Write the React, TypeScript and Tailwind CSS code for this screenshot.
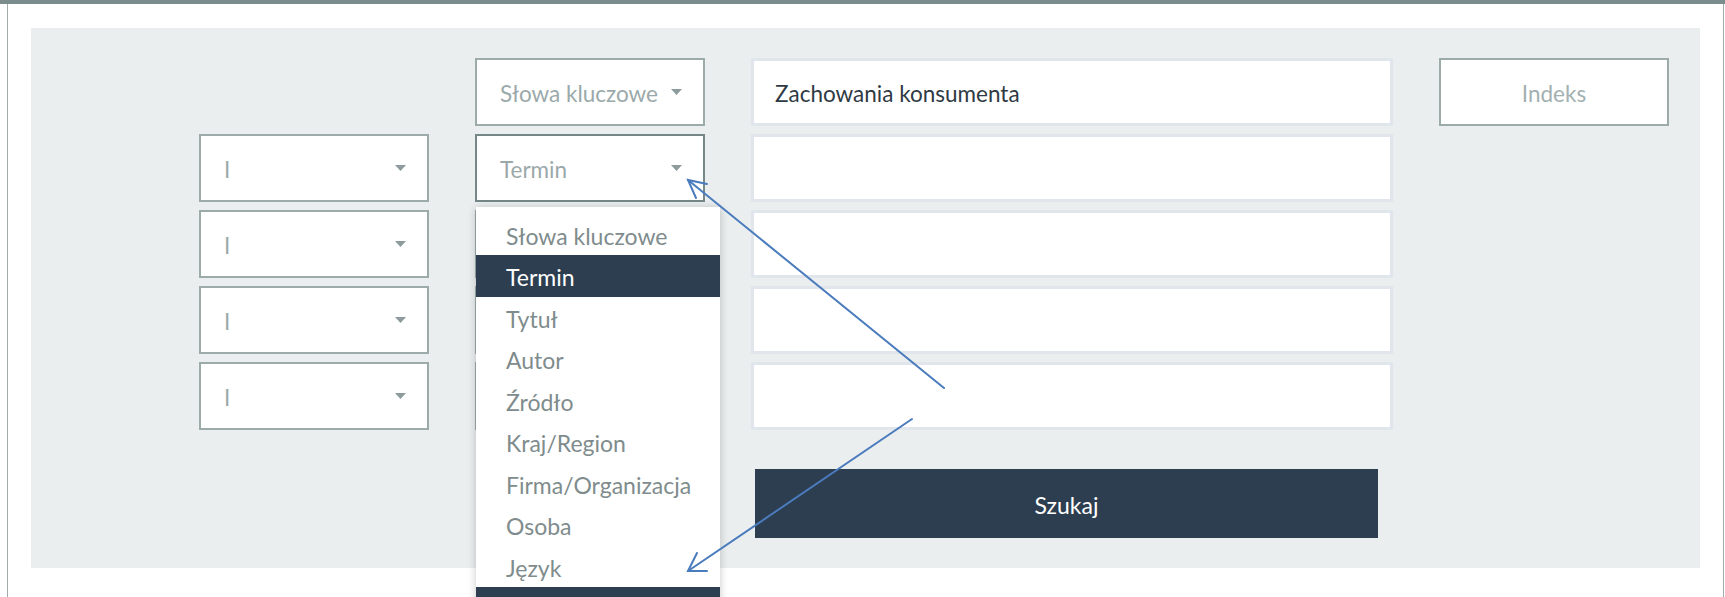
import type { ReactNode } from "react";

const fieldOptions = [
  "Słowa kluczowe",
  "Termin",
  "Tytuł",
  "Autor",
  "Źródło",
  "Kraj/Region",
  "Firma/Organizacja",
  "Osoba",
  "Język",
];

function Caret() {
  return (
    <svg width="11" height="6" viewBox="0 0 11 6" className="shrink-0">
      <path d="M0 0h11L5.5 6z" fill="#8d9b9c" />
    </svg>
  );
}

function Select({
  label = "",
  focused = false,
  children,
}: {
  label?: string;
  focused?: boolean;
  children?: ReactNode;
}) {
  return (
    <div className="relative">
      <div
        className={`flex h-full items-center justify-between bg-white pl-[23px] pr-[21px] border-2 ${
          focused ? "border-[#768787]" : "border-[#9caaa9]"
        }`}
      >
        <span className="pt-[3px] text-[22.5px] text-[#9ba9aa]">{label}</span>
        <Caret />
      </div>
      {children}
    </div>
  );
}

function TextField({ value = "" }: { value?: string }) {
  return (
    <div className="flex items-center bg-white border-[3px] border-[#e0e6ec] pl-[21px] pt-[3px] text-[22.5px] text-[#2f3a44]">
      {value}
    </div>
  );
}

// open list under the "Termin" select
function FieldMenu() {
  return (
    <ul className="absolute left-[1px] top-[73px] z-10 w-[244px] bg-white pt-[6.5px] shadow-[0_1px_8px_rgba(0,0,0,0.22)]">
      {fieldOptions.map((opt, i) => (
        <li
          key={opt}
          className={`flex h-[41.5px] items-center pl-[30px] pt-[3px] text-[23px] ${
            i === 1 ? "bg-[#2c3e50] text-white" : "text-[#7f8c8d]"
          }`}
        >
          {opt}
        </li>
      ))}
      <li className="h-[41.5px] bg-[#2c3e50]" />
    </ul>
  );
}

export default function App() {
  return (
    <div className="relative h-[597px] overflow-hidden bg-white font-['Lato',sans-serif]">
      <div className="h-[4px] bg-[#7b8c8d]" />
      <div className="ml-[7px] mr-[1px] h-[593px] border-x border-[#a2acad] px-[23px] pt-[24px]">
        <div className="h-[540px] bg-[#ebeeef] pl-[168px] pt-[30px]">
          <div className="grid grid-cols-[230px_230px_642px_230px] auto-rows-[68px] gap-x-[46px] gap-y-[8px]">
            <div />
            <Select label="Słowa kluczowe" />
            <TextField value="Zachowania konsumenta" />
            <button className="border-2 border-[#9caaa9] bg-white pt-[3px] text-[22.5px] text-[#a3b0b2]">
              Indeks
            </button>

            <Select label="I" />
            <Select label="Termin" focused>
              <FieldMenu />
            </Select>
            <TextField />
            <div />

            <Select label="I" />
            <Select />
            <TextField />
            <div />

            <Select label="I" />
            <Select />
            <TextField />
            <div />

            <Select label="I" />
            <Select />
            <TextField />
            <div />
          </div>
          <button className="ml-[556px] mt-[39px] h-[69px] w-[623px] bg-[#2c3e50] pt-[3px] text-[23px] text-white">
            Szukaj
          </button>
        </div>
      </div>

      {/* callout arrows */}
      <svg
        className="pointer-events-none absolute left-0 top-0 z-20"
        width="1725"
        height="597"
        viewBox="0 0 1725 597"
      >
        <g stroke="#4a7bbd" strokeWidth="2" fill="none" strokeLinecap="round">
          <path d="M944 388L688 180" />
          <path d="M707 184L688 180L696 198" />
          <path d="M912 419L688 571" />
          <path d="M707 571L688 571L697 553" />
        </g>
      </svg>
    </div>
  );
}
